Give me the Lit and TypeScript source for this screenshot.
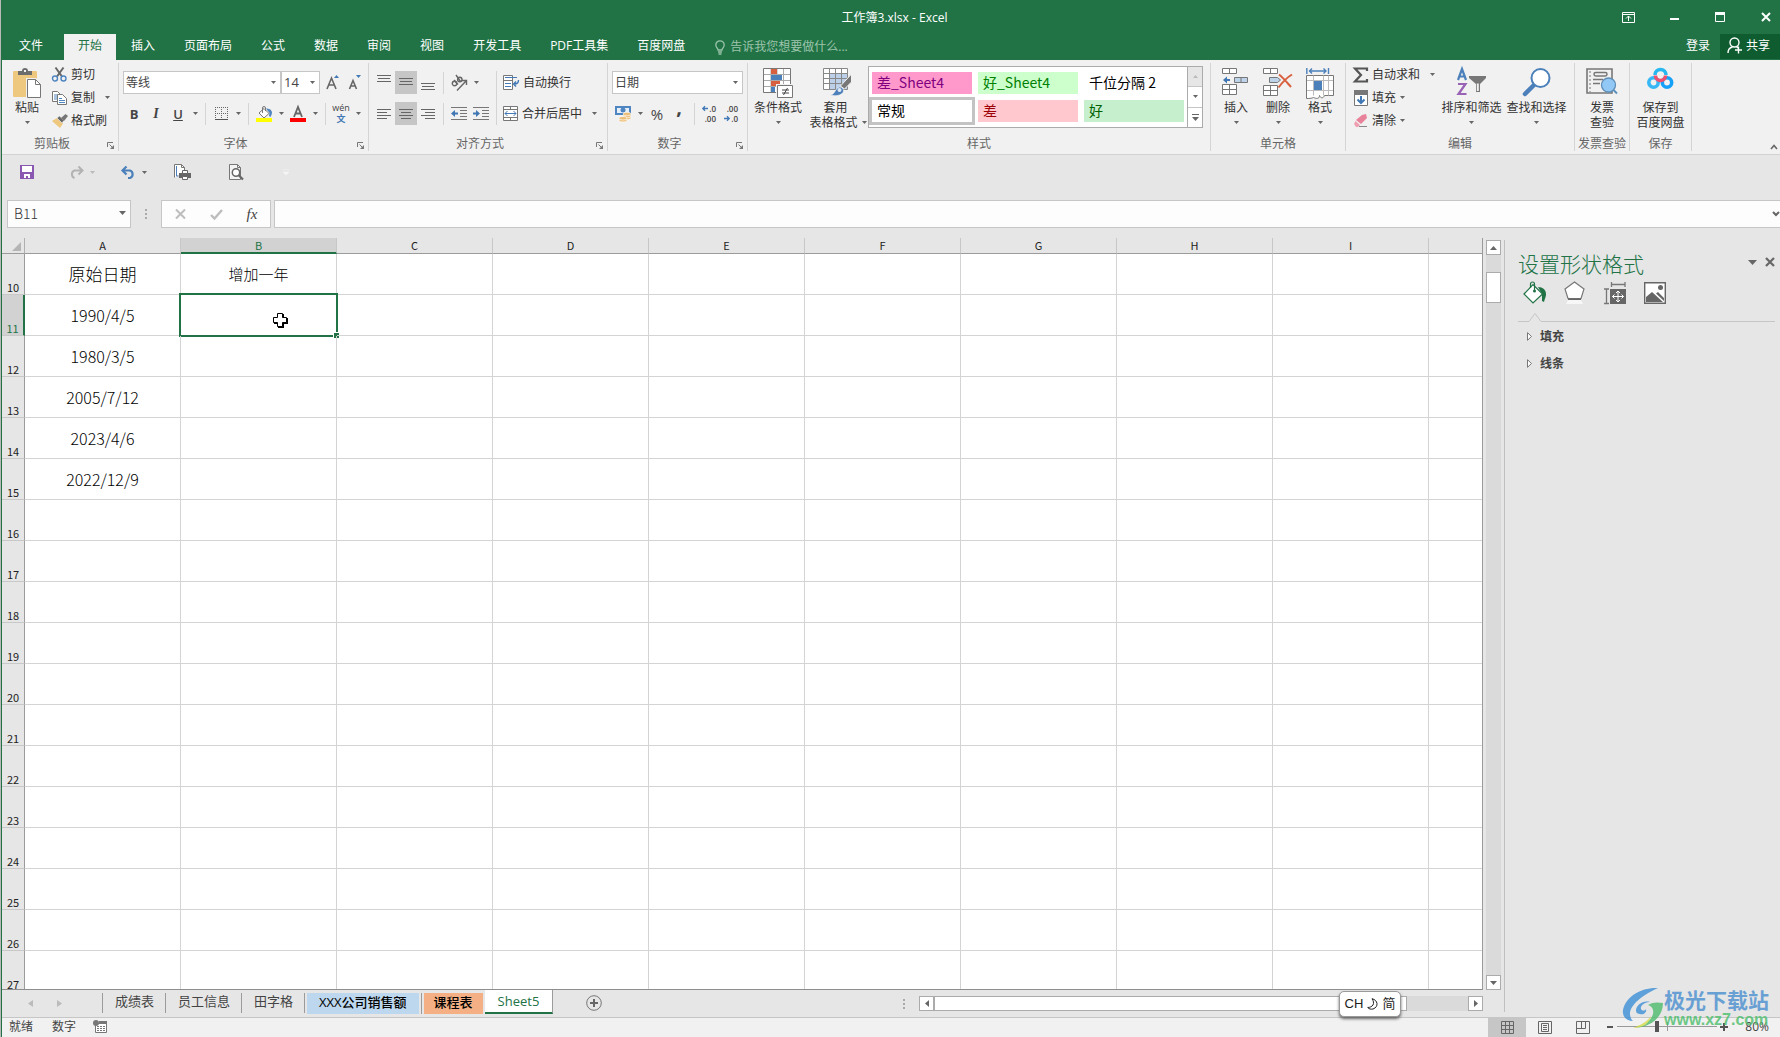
import { LitElement, html, css, nothing, TemplateResult } from "lit";
import { customElement, state } from "lit/decorators.js";
import { classMap } from "lit/directives/class-map.js";

const base = css`
  * { box-sizing: border-box; }
  :host {
    font-family: "Open Sans", "Noto Sans CJK SC", sans-serif;
    font-size: 12px;
    line-height: 16px;
    color: #444;
  }
  button, input, select {
    font: inherit;
    color: inherit;
    margin: 0;
    padding: 0;
    border: 0;
    border-radius: 0;
    background: none;
    outline: 0;
  }
  button { display: inline-flex; align-items: center; justify-content: center; white-space: nowrap; }
  svg { display: block; flex: none; overflow: visible; }
`;

const arrow = (color = "#666") => html`<svg width="5" height="3" viewBox="0 0 5 3"><path d="M0 0h5L2.5 3z" fill=${color} /></svg>`;

const lines = (rows: number[][], h = 15) => html`<svg width="14" height=${h} viewBox="0 0 14 ${h}" fill="#666">
  ${rows.map(([x, y, w]) => html`<svg x=${x} y=${y} width=${w} height="1"><rect width=${w} height="1" /></svg>`)}
</svg>`;

const launcherIcon = html`<svg width="7" height="7" viewBox="0 0 7 7"><path d="M.5 5V.5H6M2.5 2.5l3 3" fill="none" stroke="#777" /><path d="M7 3v4H3z" fill="#777" /></svg>`;

const icons: Record<string, TemplateResult> = {
  paste: html`<svg width="28" height="31" viewBox="0 0 28 31">
    <rect y="3" width="24" height="26" rx="1" fill="#edc87e" />
    <path d="M5 7V3h4a3 3 0 0 1 6 0h4v4z" fill="#6d6d6d" /><rect x="11" y="2" width="2" height="2" fill="#f1f1f1" />
    <path d="M13 10h10l5 5v16H13z" fill="#f1f1f1" />
    <path d="M14.500 11.500h8l5 5v13h-13z" fill="#fff" stroke="#777" /><path d="M22.500 11.500v5h5" fill="none" stroke="#777" /></svg>`,
  cut: html`<svg width="15" height="15" viewBox="0 0 15 15" fill="none">
    <path d="M3.500 0.500l6.500 9M11.500 0.500L5 9.500" stroke="#666" stroke-width="2" />
    <circle cx="3" cy="11.500" r="2.500" stroke="#4f86c1" stroke-width="1.400" /><circle cx="11.500" cy="11.500" r="2.500" stroke="#4f86c1" stroke-width="1.400" /></svg>`,
  copy: html`<svg width="15" height="14" viewBox="0 0 15 14">
    <path d="M.5.5h5l3 3v7h-8z" fill="#fff" stroke="#777" /><path d="M2 4h4M2 6h4M2 8h4" stroke="#4f86c1" />
    <path d="M5.500 3.500h5l4 4v6h-9z" fill="#fff" stroke="#777" /><path d="M7 7.500h3M7 9.500h6M7 11.500h6" stroke="#4f86c1" /></svg>`,
  brush: html`<svg width="16" height="14" viewBox="0 0 16 14">
    <path d="M0 7l5-3 6 5.500L8 14z" fill="#edc87e" /><path d="M5 4l2.500-2L12 6.500 10 9z" fill="#666" stroke="#f1f1f1" stroke-width=".6" />
    <path d="M9 4l4.500-4L16 2l-4 5z" fill="#777" /></svg>`,
  growA: html`<svg width="14" height="15" viewBox="0 0 14 15"><path d="M1 14l4.500-11 4.500 11M2.500 10h6" fill="none" stroke="#666" stroke-width="1.600" /><path d="M8 3l2.500-3L13 3z" fill="#4178b5" /></svg>`,
  shrinkA: html`<svg width="14" height="15" viewBox="0 0 14 15"><path d="M1.500 14L5 5.500 8.500 14M2.500 11h5" fill="none" stroke="#666" stroke-width="1.600" /><path d="M8 0h5l-2.500 3z" fill="#4178b5" /></svg>`,
  borders: html`<svg width="13" height="13" viewBox="0 0 13 13"><path d="M0 .5h13M.5 0v13M12.500 0v13M6.500 0v13M0 6.500h13" stroke="#666" stroke-dasharray="1 1" /><path d="M0 12.500h13" stroke="#555" /></svg>`,
  fill: html`<svg width="16" height="16" viewBox="0 0 16 16"><path d="M3 7l5-4.500L13 7.500 8 12z" fill="#fff" stroke="#777" /><path d="M6.500 7V2a1.500 1.500 0 0 1 3 0v3" fill="none" stroke="#777" />
    <path d="M10 2.500c4-.5 6 2 6 4 0 2-1 3-1.500 4.500L13 10l.5-3z" fill="#4f86c1" /><rect y="12" width="16" height="4" fill="#ff0" /></svg>`,
  fontColor: html`<svg width="16" height="16" viewBox="0 0 16 16"><path d="M4 11L8 1l4 10M5.500 7.500h5" fill="none" stroke="#666" stroke-width="1.800" /><rect y="12" width="16" height="4" fill="#f00" /></svg>`,
  orient: html`<svg width="17" height="16" viewBox="0 0 17 16" fill="none" stroke="#666" stroke-width="1.400"><circle cx="3.500" cy="8.500" r="2.200" /><path d="M3 5l4 4.500" /><circle cx="8.800" cy="4.500" r="2.200" /><path d="M5 0l4.500 6.500M6 15.500L15 6M11 5.500h4.500V10" /></svg>`,
  outdent: html`<svg width="16" height="13" viewBox="0 0 16 13"><path d="M0 .5h16M9 3.500h7M9 6.500h7M9 9.500h7M0 12.500h16" stroke="#777" /><path d="M0 6.500l4-3.500v2.500h3v2H4V10z" fill="#3f76b3" /></svg>`,
  indent: html`<svg width="16" height="13" viewBox="0 0 16 13"><path d="M0 .5h16M9 3.500h7M9 6.500h7M9 9.500h7M0 12.500h16" stroke="#777" /><path d="M7 6.500L3 3v2.500H0v2h3V10z" fill="#3f76b3" /></svg>`,
  wrap: html`<svg width="16" height="15" viewBox="0 0 16 15"><path d="M.5.500h9v14h-9zM.5 5.500h9M.5 10" fill="#fff" stroke="#777" /><path d="M2 2.500h12M2 8.500h6M2 11.500h6" stroke="#4178b5" /><path d="M15.500 5c0 3-1 4-4 4M13 6.500L10.500 9l2.500 2.500" fill="none" stroke="#4178b5" stroke-width="1.400" /></svg>`,
  merge: html`<svg width="15" height="15" viewBox="0 0 15 15"><path d="M.5.500h14v14H.5zM.5 3.500h14M.5 11.500h14M7.500.500v3M7.500 11.500v3" fill="#fff" stroke="#777" /><path d="M2 7.500h11M4.500 5L2 7.500 4.500 10M10.500 5L13 7.500 10.500 10" fill="none" stroke="#4178b5" /></svg>`,
  money: html`<svg width="16" height="16" viewBox="0 0 16 16"><path d="M0 0h16v9H0z" fill="#4f86c1" /><path d="M2 2h12v5H2z" fill="#e6eef7" /><circle cx="8" cy="4" r="2.500" fill="#4f86c1" />
    <g fill="#edc07a" stroke="#fff" stroke-width=".6"><ellipse cx="12" cy="12" rx="4" ry="1.800" /><ellipse cx="12" cy="10" rx="4" ry="1.800" /><ellipse cx="12" cy="8" rx="4" ry="1.800" /><ellipse cx="8" cy="14.200" rx="4" ry="1.800" /><ellipse cx="8" cy="12.200" rx="4" ry="1.800" /></g></svg>`,
  decLeft: html`<svg width="6" height="5" viewBox="0 0 6 5"><path d="M6 2.500H1M3 .3L.8 2.500 3 4.700" fill="none" stroke="#4178b5" stroke-width="1.300" /></svg>`,
  decRight: html`<svg width="6" height="5" viewBox="0 0 6 5"><path d="M0 2.500h5M3 .3l2.200 2.200L3 4.700" fill="none" stroke="#4178b5" stroke-width="1.300" /></svg>`,
  cond: html`<svg width="30" height="30" viewBox="0 0 30 30"><path d="M1 1h26v23H1z" fill="#fff" /><path d="M1 6.500h26M1 12.500h26M1 18.500h26M8 1v23M14 1v23M20.500 1v23" stroke="#aaa" fill="none" />
    <path d="M8 1h6v5H8zM8 13h9v5H8z" fill="#d9603f" /><path d="M8 7h11v5H8zM8 19h4v5H8z" fill="#4b80ba" /><path d="M.5.5h27v24H.5z" fill="none" stroke="#777" />
    <path d="M13 16h17v14H13z" fill="#f1f1f1" /><path d="M14.500 17.500h15v12h-15z" fill="#fff" stroke="#777" /><path d="M19 22h7M19 25h7M24.500 20l-4 7" stroke="#444" /></svg>`,
  table: html`<svg width="30" height="28" viewBox="0 0 30 28"><path d="M.5.5h24v21H.5z" fill="#fff" /><path d="M6 5h19v16H6z" fill="#bdd0e9" /><path d="M.5.5h24v21H.5zM.5 5.500h24M.5 10.500h24M.5 15.500h24M6.500.5v21M12.500.5v21M18.500.5v21" fill="none" stroke="#888" />
    <path d="M28.500 6v8l-7 7-4-3z" fill="#777" stroke="#f1f1f1" /><path d="M7 27c5 0 5-7 9.500-8 3 0 5 3 3.500 5.500-2 3-7 4-13 2.500z" fill="#4b80ba" stroke="#f1f1f1" stroke-width=".7" /><circle cx="16.500" cy="22" r="2" fill="#dfe9f5" /></svg>`,
  insert: html`<svg width="28" height="28" viewBox="0 0 28 28" fill="#fff" stroke="#777"><path d="M.5.5h14v5H.5zM7.500.5v5M.5 16.500h14v10H.5zM7.500 16.500v10M.5 21.500h14" /><path d="M12.500 9.500h13v5h-13zM19 9.500v5" fill="#bdd3ea" /><path d="M1 12l4-3.500v2.500h3v2H5v2.500z" fill="#3f76b3" stroke="none" /></svg>`,
  del: html`<svg width="30" height="28" viewBox="0 0 30 28" fill="#fff" stroke="#777"><path d="M.5.5h14v5H.5zM7.500.5v5M.5 17.500h14v10H.5zM7.500 17.500v10M.5 22.500h14" /><path d="M6.500 9.500h8l3 2.500-3 2.500h-8z" fill="#bdd3ea" /><path d="M16 6.500c4 3 8 8 12 12.500M29 6.500c-5 3-9 7-13.500 13" fill="none" stroke="#d9603f" stroke-width="2" /></svg>`,
  format: html`<svg width="28" height="31" viewBox="0 0 28 31" fill="none" stroke="#4b80ba"><path d="M.8 0v6M22.500 0v6M3 3h17M6 .5L3.500 3 6 5.500M17.500.5L20 3 17.500 5.500" stroke-width="1.400" />
    <path d="M.5 7.500h27v20l-9 0c-1 3-4 3-5 0 0 4-4 3-6 2-2 1-5 1-7 1z" fill="#fff" stroke="#777" /><path d="M1 12.500h26M1 22.500h26M7.500 7.500v20M17.500 7.500v20M22.500 7.500v20" stroke="#bbb" /><path d="M8 13h8v9H8z" fill="#4b80ba" stroke="none" /></svg>`,
  sigma: html`<svg width="15" height="16" viewBox="0 0 15 16"><path d="M14 4V1.500H2L8 8l-6 6.500h12V12" fill="none" stroke="#555" stroke-width="2.200" /></svg>`,
  filldown: html`<svg width="14" height="16" viewBox="0 0 14 16"><path d="M.5.500h13v15H.5z" fill="#fff" stroke="#777" /><path d="M0 0h14v5H0z" fill="#777" /><path d="M7 6v7M3.500 9.500L7 13l3.500-3.500" fill="none" stroke="#3f76b3" stroke-width="2" /></svg>`,
  eraser: html`<svg width="14" height="14" viewBox="0 0 14 14"><path d="M8 1l4-1 1 4-6 6-5-4z" fill="#e8819a" /><path d="M1.500 7l4.500 4-2 2H2L0 10z" fill="#ee9fb2" /><path d="M5 12.500h8" stroke="#888" /></svg>`,
  sort: html`<svg width="29" height="28" viewBox="0 0 29 28"><path d="M1 12L5 1l4 11M2.500 8.500h5" fill="none" stroke="#4b80ba" stroke-width="2.200" /><path d="M1 16h7.500L1.500 26H9.500" fill="none" stroke="#9862b5" stroke-width="2.200" /><path d="M12 8h17v2l-6 6v8h-4v-8l-7-6z" fill="#777" /><path d="M19.800 15.500h2v7.500h-2z" fill="#f1f1f1" /></svg>`,
  find: html`<svg width="28" height="28" viewBox="0 0 28 28"><path d="M11 17L2 26" stroke="#4b80ba" stroke-width="4.500" stroke-linecap="round" /><circle cx="17.500" cy="10" r="9" fill="#fff" stroke="#4b80ba" stroke-width="2" /></svg>`,
  invoice: html`<svg width="32" height="27" viewBox="0 0 32 27" fill="none" stroke="#777"><path d="M1 1h25v24H1z" stroke-width="1.600" /><path d="M4 3v21" stroke-dasharray="2 2" /><rect x="8" y="4.500" width="13" height="3.500" rx="1.700" stroke-width="1.500" /><path d="M7 11.500h10M7 15.500h7" stroke-width="1.400" /><circle cx="22.500" cy="17" r="7" fill="#91c8f5" stroke="#5f8fb8" stroke-width="1.300" /><path d="M27.500 22l3.500 3.500" stroke="#5b8fbd" stroke-width="2" /></svg>`,
  netdisk: html`<svg width="27" height="22" viewBox="0 0 27 22" fill="none" stroke-width="3.600"><circle cx="6.500" cy="14.500" r="4.700" stroke="#37b8f5" /><circle cx="20" cy="14.500" r="4.700" stroke="#16a0f8" /><path d="M8 7a5.500 5.500 0 0 1 11 0" stroke="#28b8f0" /><path d="M8.500 7.500a5 5 0 1 0 10 0" stroke="#f0506e" /></svg>`,
  bulb: html`<svg width="10" height="15" viewBox="0 0 10 15" fill="none" stroke="#9cc4ab" stroke-width="1.300"><path d="M3 10C3 8 .8 7.500.8 5a4.200 4.200 0 0 1 8.400 0C9.200 7.500 7 8 7 10z" /><path d="M3 12h4M3.500 14h3" /></svg>`,
  person: html`<svg width="16" height="17" viewBox="0 0 16 17" fill="none" stroke="#fff" stroke-width="1.400"><circle cx="7.500" cy="5.500" r="4.500" /><path d="M1 16c0-3 2-5.500 4.500-6M9.500 9.500l2 2M8 13h7M11.500 9.500v7" /></svg>`,
  winRibbon: html`<svg width="13" height="11" viewBox="0 0 13 11" fill="none" stroke="#fff"><path d="M.5.5h12v10H.5zM.5 2.500h12M6.500 9V4M4 6.500L6.500 4 9 6.500" /></svg>`,
  winMin: html`<svg width="9" height="11" viewBox="0 0 9 11"><path d="M0 6h9v2H0z" fill="#fff" /></svg>`,
  winMax: html`<svg width="10" height="10" viewBox="0 0 10 10"><path d="M.5.5h9v9h-9z" fill="none" stroke="#fff" /><path d="M0 0h10v3H0z" fill="#fff" /></svg>`,
  winClose: html`<svg width="10" height="10" viewBox="0 0 10 10"><path d="M1 1l8 8M9 1L1 9" stroke="#fff" stroke-width="2" /></svg>`,
  save: html`<svg width="14" height="14" viewBox="0 0 14 14"><path d="M0 0h14v14H0z" fill="#8a58b0" /><path d="M2 1h10v6H2zM4 9h6v4H8v-2H6v2H4z" fill="#fff" /></svg>`,
  redo: html`<svg width="15" height="13" viewBox="0 0 15 13" fill="none" stroke="#b3b3b3" stroke-width="2"><path d="M13 4.500H5.500a4 4 0 0 0 0 7.500M9.500.500l4 4-4 4" /></svg>`,
  undo: html`<svg width="15" height="13" viewBox="0 0 15 13" fill="none" stroke="#4b80ba" stroke-width="2.200"><path d="M2 4.500h7a4 4 0 0 1 0 7.500H7M5.500.500l-4 4 4 4" /></svg>`,
  quickprint: html`<svg width="17" height="16" viewBox="0 0 17 16"><path d="M.5 13.500V.5h7l3 3v3" fill="#fff" stroke="#777" /><path d="M7.500.5v3h3" fill="none" stroke="#777" /><path d="M2.500 2v10h2" fill="none" stroke="#4b80ba" /><path d="M5 9h12v5H5z" fill="#666" /><path d="M8.500 6.500h5v3h-5zM8.500 12.500h5v3h-5z" fill="#fff" stroke="#666" /></svg>`,
  preview: html`<svg width="15" height="16" viewBox="0 0 15 16"><path d="M.5.500h8l3 3v12H.5z" fill="#f4f4f4" stroke="#777" /><path d="M8.500.500v3h3" fill="none" stroke="#777" /><circle cx="7" cy="8.500" r="3.700" fill="#fff" stroke="#666" stroke-width="1.500" /><path d="M9.500 11l4.500 4.500" stroke="#666" stroke-width="2.200" /></svg>`,
  cancel: html`<svg width="11" height="10" viewBox="0 0 11 10"><path d="M1 .5l9 9M10 .5l-9 9" stroke="#bdbdbd" stroke-width="2" /></svg>`,
  check: html`<svg width="13" height="11" viewBox="0 0 13 11"><path d="M1 6l3.500 3.500L12 1" fill="none" stroke="#bdbdbd" stroke-width="2.400" /></svg>`,
  chevDown: html`<svg width="8" height="6" viewBox="0 0 8 6"><path d="M1 1l3 3 3-3" fill="none" stroke="#666" stroke-width="2" /></svg>`,
  chevUp: html`<svg width="8" height="6" viewBox="0 0 8 6"><path d="M1 5l3-3.500L7 5" fill="none" stroke="#666" stroke-width="1.600" /></svg>`,
  record: html`<svg width="14" height="13" viewBox="0 0 14 13"><path d="M2.500 3.500h11v9h-11z" fill="#fff" stroke="#777" /><path d="M6 1h8v3H6z" fill="#777" /><path d="M4 6.500h8M4 8.500h8M4 10.500h8" stroke="#777" stroke-dasharray="2 1" /><circle cx="3" cy="3" r="3" fill="#777" /></svg>`,
  viewNormal: html`<svg width="13" height="13" viewBox="0 0 13 13"><path d="M.5.500h12v12H.5zM.5 4.500h12M.5 8.500h12M4.500.500v12M8.500.500v12" fill="none" stroke="#666" /></svg>`,
  viewPage: html`<svg width="14" height="13" viewBox="0 0 14 13"><path d="M.5.500h13v12H.5zM3.500 2.500h7v8h-7zM5 4.500h4M5 6.500h4M5 8.500h4" fill="none" stroke="#666" /></svg>`,
  viewBreak: html`<svg width="14" height="13" viewBox="0 0 14 13"><path d="M.5.500h13v12H.5zM.5 7.500h9v-7M5.500.500v7" fill="none" stroke="#666" /></svg>`,
};

const menuButton = (icon: string, label: TemplateResult | string, opts: { cls?: string; menu?: boolean } = {}) => html`
  <button class="big ${opts.cls ?? ""}">
    <span class="pic">${icons[icon]}</span>
    <span class="lbl">${label}</span>
    ${opts.menu === false ? nothing : html`<span class="below">${arrow()}</span>`}
  </button>`;

@customElement("ribbon-bar")
class RibbonBar extends LitElement {
  static styles = [base, css`
    :host { display: block; background: #f1f1f1; border-bottom: 1px solid #d2d2d2; }
    .ribbon { display: flex; height: 94px; padding: 3px 0; }
    .group { display: flex; flex-direction: column; border-right: 1px solid #d4d4d4; flex: none; }
    .body { flex: 1; display: flex; }
    .cap { display: grid; grid-template-columns: 1fr; height: 15px; align-items: center; text-align: center; color: #666; line-height: 15px; white-space: nowrap; }
    .cap.wide-end { grid-template-columns: 1fr 16px; }
    .cap button { align-self: end; height: 11px; padding-bottom: 1px; }
    .g-clip { width: 117px; }
    .g-font { width: 250px; }
    .g-align { width: 239px; }
    .g-num { width: 140px; }
    .g-style { width: 463px; }
    .g-cells { width: 135px; }
    .g-edit { width: 229px; }
    .g-inv { width: 55px; }
    .g-save { width: 62px; }
    .big { flex-direction: column; justify-content: flex-start; padding-top: 5px; line-height: 15px; color: #333; }
    .pic { height: 32px; display: flex; align-items: flex-start; }
    .lbl { display: block; }
    .below { height: 14px; display: flex; align-items: center; }
    .paste { width: 50px; }
    .cond { width: 60px; }
    .tbl { width: 60px; }
    .cell { width: 42px; }
    .cells { padding-left: 4px; }
    .wide { width: 65px; }
    .fillw { flex: 1; }
    .with { display: flex; align-items: center; gap: 4px; }
    .over { display: block; width: 52px; }
    .small { display: flex; flex-direction: column; align-items: flex-start; }
    .small button { height: 23px; gap: 4px; color: #333; }
    .small .ic { width: 15px; display: flex; justify-content: center; }
    .small .gap { padding-left: 6px; display: flex; }
    .edit { padding-left: 7px; width: 93px; }
    .edit .near { display: flex; }
    .two { display: flex; flex-direction: column; gap: 8px; padding: 8px 0 0 4px; }
    .two.tools { padding-left: 0; }
    .row { display: flex; height: 23px; align-items: center; }
    .ib { width: 22px; height: 23px; }
    .on { background: #c6c6c6; }
    .dd { width: 12px; height: 23px; }
    .vs { width: 1px; height: 22px; margin: 0 4px; background: #d4d4d4; }
    .tall { width: 1px; height: 54px; margin: 8px 6px 0 4px; background: #d4d4d4; }
    .combo { position: relative; display: block; height: 23px; }
    .combo select { appearance: none; width: 100%; height: 23px; border: 1px solid #c6c6c6; background: #fff; padding: 0 2px; line-height: 21px; }
    .combo svg { position: absolute; right: 5px; top: 10px; }
    .fontname { width: 158px; }
    .fontsize { width: 39px; margin-right: 2px; }
    .fontsize select { font-size: 13px; }
    .numfmt { width: 131px; }
    .bold { font-weight: 700; font-size: 13px; }
    .ital { font-style: italic; font-family: "Liberation Serif", serif; font-weight: 700; font-size: 14px; }
    .und { font-weight: 600; text-decoration: underline; font-size: 13px; }
    .pct { font-size: 15px; }
    .comma { font-size: 20px; font-weight: 700; line-height: 8px; padding-bottom: 14px; }
    .wen { flex-direction: column; line-height: 10px; font-size: 9px; }
    .wen b { color: #4178b5; font-size: 9px; line-height: 12px; }
    .dec { flex-direction: column; align-items: flex-end; padding-right: 5px; font-size: 8px; font-weight: 600; line-height: 10px; }
    .dec span { display: flex; align-items: center; gap: 1px; }
    .lab { gap: 4px; height: 23px; color: #333; justify-content: flex-start; }
    .lab .gap { padding-left: 6px; }
    .gallery { display: flex; margin-top: 3px; height: 62px; border: 1px solid #ababab; background: #fff; }
    .styles { display: grid; grid-template-columns: repeat(3, 106px); grid-auto-rows: 28px; padding-top: 2px; }
    .styles button { justify-content: flex-start; width: 106px; height: 28px; border: 3px solid #fff; padding: 0 0 2px 5px; font-size: 14px; font-family: "Noto Sans CJK SC", sans-serif; line-height: 20px; background-clip: padding-box; }
    .styles .sel { border-color: #c3c3c3; color: #000; }
    .s1 { background: #ff99cc; color: #800080; }
    .s2 { background: #ccffcc; color: #008000; }
    .s3 { color: #000; }
    .s5 { background: #ffc7ce; color: #9c0006; }
    .s6 { background: #c6efce; color: #006100; }
    .spin { display: flex; flex-direction: column; border-left: 1px solid #ababab; width: 15px; }
    .spin button { flex: 1; border-bottom: 1px solid #c6c6c6; width: 14px; }
    .spin button:first-child { background: #e6e6e6; }
    .spin button:last-child { border-bottom: 0; }
    .rest { flex: 1; display: flex; justify-content: flex-end; align-items: flex-end; padding: 0 2px 1px 0; }
  `];

  private caption(text: string, launcher = false) {
    return html`<div class=${classMap({ cap: true, "wide-end": launcher })}><span>${text}</span>${launcher ? html`<button aria-label="${text}设置">${launcherIcon}</button>` : nothing}</div>`;
  }

  private dd(label: string) {
    return html`<button class="dd" aria-label=${label}>${arrow()}</button>`;
  }

  render() {
    return html`<div class="ribbon">
      <section class="group g-clip">
        <div class="body">
          ${menuButton("paste", "粘贴", { cls: "paste" })}
          <div class="small">
            <button><span class="ic">${icons.cut}</span>剪切</button>
            <button><span class="ic">${icons.copy}</span>复制<span class="gap">${arrow()}</span></button>
            <button><span class="ic">${icons.brush}</span>格式刷</button>
          </div>
        </div>
        ${this.caption("剪贴板", true)}
      </section>
      <section class="group g-font">
        <div class="body"><div class="two">
          <div class="row">
            <label class="combo fontname"><select aria-label="字体"><option>等线</option></select>${arrow()}</label>
            <label class="combo fontsize"><select aria-label="字号"><option>14</option></select>${arrow()}</label>
            <button class="ib" aria-label="增大字号">${icons.growA}</button>
            <button class="ib" aria-label="减小字号">${icons.shrinkA}</button>
          </div>
          <div class="row">
            <button class="ib bold">B</button><button class="ib ital">I</button><button class="ib und">U</button>${this.dd("下划线")}
            <span class="vs"></span>
            <button class="ib" aria-label="边框">${icons.borders}</button>${this.dd("边框选项")}
            <span class="vs"></span>
            <button class="ib" aria-label="填充颜色">${icons.fill}</button>${this.dd("填充颜色选项")}
            <button class="ib" aria-label="字体颜色">${icons.fontColor}</button>${this.dd("字体颜色选项")}
            <span class="vs"></span>
            <button class="ib wen"><span>wén</span><b>文</b></button>${this.dd("拼音选项")}
          </div>
        </div></div>
        ${this.caption("字体", true)}
      </section>
      <section class="group g-align">
        <div class="body">
          <div class="two">
            <div class="row">
              <button class="ib" aria-label="顶端对齐">${lines([[0, 0, 14], [1, 3, 12], [0, 6, 14]])}</button>
              <button class="ib on" aria-label="垂直居中">${lines([[0, 3, 14], [1, 6, 12], [0, 9, 14]])}</button>
              <button class="ib" aria-label="底端对齐">${lines([[0, 8, 14], [1, 11, 12], [0, 14, 14]])}</button>
              <span class="vs"></span>
              <button class="ib" aria-label="方向">${icons.orient}</button>${this.dd("方向选项")}
            </div>
            <div class="row">
              <button class="ib" aria-label="左对齐">${lines([[0, 1, 14], [0, 4, 10], [0, 7, 14], [0, 10, 10]], 11)}</button>
              <button class="ib on" aria-label="居中">${lines([[0, 1, 14], [2, 4, 10], [0, 7, 14], [2, 10, 10]], 11)}</button>
              <button class="ib" aria-label="右对齐">${lines([[0, 1, 14], [4, 4, 10], [0, 7, 14], [4, 10, 10]], 11)}</button>
              <span class="vs"></span>
              <button class="ib" aria-label="减少缩进">${icons.outdent}</button>
              <button class="ib" aria-label="增加缩进">${icons.indent}</button>
            </div>
          </div>
          <span class="tall"></span>
          <div class="two tools">
            <button class="lab">${icons.wrap}自动换行</button>
            <button class="lab">${icons.merge}合并后居中<span class="gap">${arrow()}</span></button>
          </div>
        </div>
        ${this.caption("对齐方式", true)}
      </section>
      <section class="group g-num">
        <div class="body"><div class="two">
          <div class="row"><label class="combo numfmt"><select aria-label="数字格式"><option>日期</option></select>${arrow()}</label></div>
          <div class="row">
            <button class="ib" aria-label="会计数字格式">${icons.money}</button>${this.dd("会计格式选项")}
            <button class="ib pct">%</button><button class="ib comma">,</button>
            <span class="vs"></span>
            <button class="ib dec" aria-label="增加小数位数"><span>${icons.decLeft}.0</span><span>.00</span></button>
            <button class="ib dec" aria-label="减少小数位数"><span>.00</span><span>${icons.decRight}.0</span></button>
          </div>
        </div></div>
        ${this.caption("数字", true)}
      </section>
      <section class="group g-style">
        <div class="body">
          ${menuButton("cond", "条件格式", { cls: "cond" })}
          ${menuButton("table", html`<span class="over">套用</span><span class="with">表格格式${arrow()}</span>`, { cls: "tbl", menu: false })}
          <div class="gallery">
            <div class="styles">
              <button class="s1">差_Sheet4</button><button class="s2">好_Sheet4</button><button class="s3">千位分隔 2</button>
              <button class="sel">常规</button><button class="s5">差</button><button class="s6">好</button>
            </div>
            <div class="spin">
              <button aria-label="上一行"><svg width="5" height="3"><path d="M0 3h5L2.500 0z" fill="#bbb" /></svg></button>
              <button aria-label="下一行">${arrow()}</button>
              <button aria-label="其他样式"><svg width="7" height="7"><path d="M0 .5h7" stroke="#666" /><path d="M0 3h7L3.500 7z" fill="#666" /></svg></button>
            </div>
          </div>
        </div>
        ${this.caption("样式")}
      </section>
      <section class="group g-cells">
        <div class="body cells">
          ${menuButton("insert", "插入", { cls: "cell" })}${menuButton("del", "删除", { cls: "cell" })}${menuButton("format", "格式", { cls: "cell" })}
        </div>
        ${this.caption("单元格")}
      </section>
      <section class="group g-edit">
        <div class="body">
          <div class="small edit">
            <button><span class="ic">${icons.sigma}</span>自动求和<span class="gap">${arrow()}</span></button>
            <button><span class="ic">${icons.filldown}</span>填充<span class="near">${arrow()}</span></button>
            <button><span class="ic">${icons.eraser}</span>清除<span class="near">${arrow()}</span></button>
          </div>
          ${menuButton("sort", "排序和筛选", { cls: "wide" })}${menuButton("find", "查找和选择", { cls: "wide" })}
        </div>
        ${this.caption("编辑")}
      </section>
      <section class="group g-inv">
        <div class="body">${menuButton("invoice", html`发票<br />查验`, { cls: "fillw", menu: false })}</div>
        ${this.caption("发票查验")}
      </section>
      <section class="group g-save">
        <div class="body">${menuButton("netdisk", html`保存到<br />百度网盘`, { cls: "fillw", menu: false })}</div>
        ${this.caption("保存")}
      </section>
      <div class="rest"><button aria-label="折叠功能区">${icons.chevUp}</button></div>
    </div>`;
  }
}

@customElement("sheet-grid")
class SheetGrid extends LitElement {
  static styles = [base, css`
    :host { display: block; overflow: hidden; background: #fff; border-right: 1px solid #9b9b9b; border-bottom: 1px solid #8e8e8e; font-family: "Noto Sans CJK SC", sans-serif; }
    table { width: 100%; table-layout: fixed; border-collapse: separate; border-spacing: 0; }
    .ch { width: 23px; }
    .cc { width: 156px; }
    th { font-weight: 400; font-size: 11px; line-height: 14px; background: #e6e6e6; color: #222; padding: 0; }
    thead th { height: 16px; vertical-align: top; border-right: 1px solid #c8c8c8; border-bottom: 1px solid #9b9b9b; }
    thead th.hot { background: #d2d2d2; color: #217346; border-bottom: 2px solid #217346; }
    thead th.corner { border-right-color: #b0b0b0; }
    .corner svg { margin: 4px 3px 0 auto; }
    tbody th { height: 41px; vertical-align: bottom; border-right: 1px solid #9b9b9b; border-bottom: 1px solid #c8c8c8; }
    tbody th.hot { background: #d2d2d2; color: #217346; border-right: 2px solid #217346; }
    td { height: 41px; padding: 0; text-align: center; vertical-align: middle; border-right: 1px solid #d4d4d4; border-bottom: 1px solid #d4d4d4; color: #000; font-weight: 300; font-size: 16px; line-height: 24px; position: relative; }
    td.head { font-size: 17px; }
    td.sub { font-size: 15px; }
    thead th:last-child, td:last-child { border-right: 0; }
    .cursor { position: absolute; inset: -2px; border: 2px solid #217346; }
    .handle { position: absolute; right: -3px; bottom: -3px; width: 6px; height: 6px; background: #217346; border: 1px solid #fff; border-width: 1px 0 0 1px; }
    .pointer { position: absolute; left: 91px; top: 17px; }
  `];

  private cols = ["A", "B", "C", "D", "E", "F", "G", "H", "I", ""];
  private rows = Array.from({ length: 18 }, (_, i) => i + 10);
  private data: Record<string, string> = {
    A10: "原始日期", B10: "增加一年", A11: "1990/4/5", A12: "1980/3/5", A13: "2005/7/12", A14: "2023/4/6", A15: "2022/12/9",
  };
  @state() private active = "B11";

  render() {
    return html`<table>
      <colgroup><col class="ch" />${this.cols.map((c) => html`<col class=${c ? "cc" : ""} />`)}</colgroup>
      <thead><tr><th class="corner"><svg width="9" height="9"><path d="M9 0v9H0z" fill="#b5b5b5" /></svg></th>
        ${this.cols.map((c) => html`<th class=${classMap({ hot: c !== "" && this.active.startsWith(c) })}>${c}</th>`)}</tr></thead>
      <tbody>${this.rows.map((r) => html`<tr><th class=${classMap({ hot: this.active.slice(1) === String(r) })}>${r}</th>
        ${this.cols.map((c) => {
          const id = c + r;
          return html`<td class=${classMap({ head: id === "A10", sub: id === "B10" })}>${this.data[id] ?? ""}${id === this.active ? html`
            <span class="cursor"><span class="handle"></span></span>
            <svg class="pointer" width="16" height="16" viewBox="0 0 16 16"><path d="M6 2h6v4h4v6h-4v4H6v-4H2V6h4z" fill="#000" /><path d="M5.500 1.500h5v4h4v5h-4v4h-5v-4h-4v-5h4z" fill="#fff" stroke="#000" /></svg>` : nothing}</td>`;
        })}</tr>`)}</tbody>
    </table>`;
  }
}

@customElement("format-pane")
class FormatPane extends LitElement {
  static styles = [base, css`
    :host { display: block; border-left: 1px solid #c0c0c0; padding: 10px 5px 0 13px; }
    header { display: flex; align-items: flex-start; }
    h2 { flex: 1; margin: 0; font: 300 21px/26px "Noto Sans CJK SC", sans-serif; color: #217346; white-space: nowrap; }
    .tools { display: flex; gap: 8px; padding-top: 7px; }
    .icons { display: flex; gap: 17px; padding: 5px 0 0 5px; height: 34px; }
    .icons button { width: 23px; height: 23px; }
    .notch { display: flex; padding: 3px 0 1px; }
    .notch i { flex: 1; border-bottom: 1px solid #c6c6c6; height: 9px; }
    .item { display: flex; gap: 8px; height: 27px; width: 100%; padding-left: 9px; justify-content: flex-start; font-weight: 700; color: #444; }
  `];

  render() {
    return html`
      <header><h2>设置形状格式</h2><div class="tools">
        <button aria-label="窗格选项"><svg width="9" height="5"><path d="M0 0h9L4.500 5z" fill="#666" /></svg></button>
        <button aria-label="关闭"><svg width="10" height="10"><path d="M1 1l8 8M9 1L1 9" stroke="#666" stroke-width="2.200" /></svg></button>
      </div></header>
      <div class="icons">
        <button aria-label="填充与线条"><svg width="24" height="22" viewBox="0 0 24 22"><path d="M15 5c5 0 8 3 8 7 0 3-1 4-2 8l-2-1v-7z" fill="#217346" /><path d="M1 12L10 2.500l9.500 9.500L10 21z" fill="#fff" stroke="#217346" stroke-width="1.200" /><path d="M7.500 6V2a2 2 0 0 1 4 0v7" fill="none" stroke="#217346" stroke-width="1.200" /><circle cx="11.500" cy="9" r="1.500" fill="#217346" /></svg></button>
        <button aria-label="效果"><svg width="21" height="23" viewBox="0 0 21 23"><path d="M10.500 1l9.500 7-3 9.500H4L1 8z" fill="#fff" stroke="#777" stroke-width="1.200" /><path d="M4 17.500h13v1.500H4z" fill="#666" /><path d="M4 19l-2 4h17l-2-4z" fill="#f7f7f7" /></svg></button>
        <button aria-label="大小与属性"><svg width="22" height="22" viewBox="0 0 22 22"><path d="M6 7h16v15H6z" fill="#666" /><path d="M7 2.500h14M7.500 0v5M21 0v5M2.500 7v14M0 7h5M0 21.500h5" stroke="#777" stroke-width="1.300" fill="none" /><path d="M14 9v11M8.500 14.500h11M12 11l2-2 2 2M12 18l2 2 2-2M10.500 12.500l-2 2 2 2M17.500 12.500l2 2-2 2" stroke="#fff" fill="none" /></svg></button>
        <button aria-label="图片"><svg width="22" height="22" viewBox="0 0 22 22"><path d="M.7.700h20.600v20.600H.7z" fill="#fff" stroke="#666" stroke-width="1.400" /><circle cx="16.500" cy="5.500" r="2.500" fill="#666" /><path d="M2 20v-5l6-5 11 10zM12 11.500l2-1.500 6 6v3z" fill="#666" /></svg></button>
      </div>
      <div class="notch"><svg width="24" height="9" viewBox="0 0 24 9"><path d="M0 8.500h11l6-8 6 8h1" fill="none" stroke="#c6c6c6" /></svg><i></i></div>
      ${["填充", "线条"].map((t) => html`<button class="item"><svg width="5" height="9"><path d="M.5.700v7.600L4.500 4.500z" fill="#fff" stroke="#777" /></svg>${t}</button>`)}
    `;
  }
}

@customElement("app-root")
class AppRoot extends LitElement {
  static styles = [base, css`
    :host { display: block; padding-left: 1px; background: #b8b8b8; }
    .app { position: relative; display: flex; flex-direction: column; height: 100vh; background: #e6e6e6; border-left: 1px solid #217346; overflow: hidden; }
    .title { display: grid; grid-template-columns: 1fr auto 1fr; height: 34px; align-items: center; background: #217346; color: #fff; padding-left: 7px; }
    .title .doc { padding-top: 2px; }
    .wins { display: flex; justify-content: flex-end; }
    .wins button { width: 46px; height: 30px; }
    .wins button:last-child { width: 28px; margin-left: 9px; }
    nav { display: flex; height: 26px; background: #217346; color: #fff; gap: 1px; }
    nav .tab { padding: 0 14px 2px; }
    nav .file { padding: 0 20px 2px 17px; }
    nav .current { background: #f1f1f1; color: #217346; }
    .tell { display: flex; align-items: center; gap: 5px; padding-left: 15px; flex: 1; }
    .tell input { width: 160px; }
    .tell input::placeholder { color: #9cc4ab; opacity: 1; }
    .login { padding: 0 9px 2px; }
    .share { background: #0e5c2f; width: 60px; height: 25px; gap: 3px; padding: 0 3px 2px 0; }
    .qat { display: flex; align-items: center; height: 34px; padding-left: 15px; margin-bottom: 11px; }
    .qat button { height: 24px; width: 20px; }
    .qat .dd { width: 13px; }
    .qat .sp { margin-left: 29px; }
    .qat .sp2 { margin-left: 19px; }
    .qat .sp3 { margin-left: 21px; }
    .qat .sp4 { margin-left: 34px; }
    .qat .sp5 { margin-left: 30px; }
    .fbar { display: flex; height: 28px; margin-bottom: 10px; padding-left: 5px; }
    .name { position: relative; width: 124px; }
    .name input { width: 100%; height: 28px; border: 1px solid #c6c6c6; background: #fdfdfd; padding: 0 0 2px 6px; font: 300 14px "Noto Sans CJK SC", sans-serif; color: #333; }
    .name button { position: absolute; right: 4px; top: 6px; width: 10px; height: 14px; }
    .dots { width: 30px; display: flex; align-items: center; justify-content: center; }
    .fx { display: flex; width: 110px; justify-content: space-around; border: 1px solid #c6c6c6; background: #fdfdfd; margin-right: 3px; }
    .fx button { width: 30px; }
    .fx .fn { font: italic 400 15px "Liberation Serif", serif; color: #444; }
    .formula { flex: 1; display: flex; border: 1px solid #c6c6c6; border-right: 0; background: #fdfdfd; }
    .formula input { flex: 1; }
    .work { flex: 1; display: flex; min-height: 0; }
    .left { flex: 1; display: flex; flex-direction: column; min-width: 0; }
    .gridrow { flex: 1; display: flex; min-height: 0; }
    sheet-grid { flex: 1; min-width: 0; }
    .vscroll { display: flex; flex-direction: column; width: 15px; margin: 2px 3px 0; background: #dadada; }
    .sb { width: 15px; height: 15px; background: #fff; border: 1px solid #ababab; flex: none; }
    .vthumb { height: 31px; margin-top: 17px; background: #fff; border: 1px solid #ababab; }
    .fillv { flex: 1; }
    format-pane { width: 276px; margin: 2px 0 5px; flex: none; }
    .strip { display: flex; height: 27px; align-items: flex-start; padding-right: 21px; }
    .tabs { display: flex; height: 24px; font-size: 13px; }
    .tabs .nav { width: 29px; }
    .tabs .navs { width: 101px; padding-left: 14px; border-right: 1px solid #9b9b9b; display: flex; margin-top: 3px; height: 20px; }
    .tabs .sheet { padding: 0 11px 0 12px; border-right: 1px solid #9b9b9b; margin-top: 3px; height: 20px; }
    .tabs .sheet span { line-height: 18px; padding-bottom: 4px; }
    .tabs .colored { padding: 0 2px; height: 21px; }
    .tabs .colored span { padding: 0 12px; height: 21px; line-height: 19px; color: #000; font-weight: 500; }
    .tabs .blue span { background: #bdd7ee; }
    .tabs .orange span { background: #f4b084; padding: 0 10px; }
    .tabs .orange { border-right: 0; }
    .tabs .cur { background: #fff; color: #217346; border-right: 1px solid #9b9b9b; border-bottom: 2px solid #217346; padding: 0 13px; }
    .add { width: 20px; height: 24px; margin: 1px 0 0 31px; }
    .hs { flex: 1; display: flex; justify-content: flex-end; align-items: center; height: 27px; gap: 14px; }
    .track { display: flex; width: 564px; background: #dadada; }
    .hthumb { flex: 1; background: #fff; border: 1px solid #ababab; margin-right: 61px; }
    .status { display: flex; align-items: center; height: 20px; background: #f1f1f1; border-top: 1px solid #c6c6c6; padding: 0 11px 2px 7px; }
    .status .txt { margin-right: 19px; }
    .status .txt2 { margin-right: 17px; }
    .views { margin-left: auto; display: flex; }
    .views button { width: 38px; height: 19px; margin-bottom: -2px; }
    .views .on { background: #c6c6c6; }
    .zoom { display: flex; align-items: center; margin-left: 1px; }
    .zoom button { width: 14px; height: 16px; }
    .range { appearance: none; width: 100px; height: 12px; background: linear-gradient(#999, #999) center / 100% 1px no-repeat, linear-gradient(#999, #999) center / 1px 9px no-repeat; }
    .range::-webkit-slider-thumb { appearance: none; width: 4px; height: 11px; background: #555; }
    .pctv { width: 26px; margin-left: 12px; text-align: right; }
    .ime { position: absolute; right: 379px; bottom: 20px; width: 62px; height: 26px; display: flex; align-items: center; justify-content: center; gap: 4px; background: #fff; border: 1px solid #999; border-radius: 5px; box-shadow: 0 2px 3px #666; color: #222; font: 13px/18px "Liberation Sans", "Noto Sans CJK SC", sans-serif; }
    .mark { position: absolute; right: 11px; bottom: 8px; display: flex; opacity: .8; pointer-events: none; }
    .mark div { display: flex; flex-direction: column; }
    .mark b { font: 700 21px/24px "Noto Sans CJK SC", sans-serif; color: #4b8fd0; }
    .mark span { font: 600 16px/18px "Liberation Sans", sans-serif; color: #4dbd6b; }
  `];

  private tabs = ["插入", "页面布局", "公式", "数据", "审阅", "视图", "开发工具", "PDF工具集", "百度网盘"];

  render() {
    return html`<div class="app">
      <div class="title"><span></span><span class="doc">工作簿3.xlsx - Excel</span>
        <div class="wins">
          <button aria-label="功能区显示选项">${icons.winRibbon}</button><button aria-label="最小化">${icons.winMin}</button>
          <button aria-label="最大化">${icons.winMax}</button><button aria-label="关闭">${icons.winClose}</button>
        </div></div>
      <nav>
        <button class="file">文件</button><button class="tab current">开始</button>
        ${this.tabs.map((t) => html`<button class="tab">${t}</button>`)}
        <label class="tell">${icons.bulb}<input aria-label="操作说明搜索" placeholder="告诉我您想要做什么..." /></label>
        <button class="login">登录</button><button class="share">${icons.person}共享</button>
      </nav>
      <ribbon-bar></ribbon-bar>
      <div class="qat">
        <button aria-label="保存">${icons.save}</button>
        <button class="sp" aria-label="恢复">${icons.redo}</button><button class="dd" aria-label="恢复选项">${arrow("#bbb")}</button>
        <button class="sp2" aria-label="撤消">${icons.undo}</button><button class="dd" aria-label="撤消选项">${arrow()}</button>
        <button class="sp3" aria-label="快速打印">${icons.quickprint}</button>
        <button class="sp4" aria-label="打印预览">${icons.preview}</button>
        <button class="sp5" aria-label="自定义快速访问工具栏"><svg width="6" height="6"><path d="M0 .5h6M0 3h6L3 6z" fill="#f5f5f5" stroke="#f5f5f5" stroke-width=".5" /></svg></button>
      </div>
      <div class="fbar">
        <div class="name"><input aria-label="名称框" .value=${"B11"} /><button aria-label="名称列表"><svg width="7" height="4"><path d="M0 0h7L3.500 4z" fill="#666" /></svg></button></div>
        <div class="dots"><svg width="2" height="10" fill="#aaa"><path d="M0 0h2v2H0zM0 4h2v2H0zM0 8h2v2H0z" /></svg></div>
        <div class="fx"><button aria-label="取消">${icons.cancel}</button><button aria-label="输入">${icons.check}</button><button class="fn">fx</button></div>
        <div class="formula"><input aria-label="编辑栏" /><button aria-label="展开编辑栏">${icons.chevDown}</button></div>
      </div>
      <div class="work">
        <div class="left">
          <div class="gridrow">
            <sheet-grid></sheet-grid>
            <div class="vscroll">
              <button class="sb" aria-label="向上滚动"><svg width="7" height="4"><path d="M0 4h7L3.500 0z" fill="#666" /></svg></button>
              <div class="vthumb"></div><div class="fillv"></div>
              <button class="sb" aria-label="向下滚动"><svg width="7" height="4"><path d="M0 0h7L3.500 4z" fill="#666" /></svg></button>
            </div>
          </div>
          <div class="strip">
            <div class="tabs">
              <div class="navs"><button class="nav" aria-label="上一个工作表"><svg width="5" height="7"><path d="M5 0v7L0 3.500z" fill="#bbb" /></svg></button><button class="nav" aria-label="下一个工作表"><svg width="5" height="7"><path d="M0 0v7l5-3.500z" fill="#bbb" /></svg></button></div>
              ${["成绩表", "员工信息", "田字格"].map((t) => html`<button class="sheet"><span>${t}</span></button>`)}
              <button class="sheet colored blue"><span>XXX公司销售额</span></button>
              <button class="sheet colored orange"><span>课程表</span></button>
              <button class="cur">Sheet5</button>
            </div>
            <button class="add" aria-label="新工作表"><svg width="16" height="16"><circle cx="8" cy="8" r="7.300" fill="none" stroke="#777" /><path d="M8 4v8M4 8h8" stroke="#666" stroke-width="2" /></svg></button>
            <div class="hs">
              <svg width="2" height="10" fill="#aaa"><path d="M0 0h2v2H0zM0 4h2v2H0zM0 8h2v2H0z" /></svg>
              <div class="track">
                <button class="sb" aria-label="向左滚动"><svg width="4" height="7"><path d="M4 0v7L0 3.500z" fill="#666" /></svg></button>
                <div class="hthumb"></div>
                <button class="sb" aria-label="向右滚动"><svg width="4" height="7"><path d="M0 0v7l4-3.500z" fill="#666" /></svg></button>
              </div>
            </div>
          </div>
        </div>
        <format-pane></format-pane>
      </div>
      <div class="status">
        <span class="txt">就绪</span><span class="txt2">数字</span><button aria-label="录制宏">${icons.record}</button>
        <div class="views"><button class="on" aria-label="普通">${icons.viewNormal}</button><button aria-label="页面布局">${icons.viewPage}</button><button aria-label="分页预览">${icons.viewBreak}</button></div>
        <div class="zoom">
          <button aria-label="缩小"><svg width="6" height="2"><path d="M0 0h6v2H0z" fill="#555" /></svg></button>
          <input class="range" type="range" aria-label="缩放" min="0" max="200" .value=${"80"} />
          <button aria-label="放大"><svg width="8" height="8"><path d="M3 0h2v8H3zM0 3h8v2H0z" fill="#555" /></svg></button>
          <span class="pctv">80%</span>
        </div>
      </div>
      <div class="ime"><span>CH</span><svg width="11" height="12" viewBox="0 0 11 12"><path d="M5 .7C11 2 12 9 6 11 4 11.500 2 11 .7 9.500 3 9.500 5 8.500 6 7c1-2 .5-4-1-6.300z" fill="none" stroke="#222" /></svg><span>简</span></div>
      <div class="mark">
        <svg width="42" height="42" viewBox="0 0 42 42"><path d="M36 1C20 0 4 9 1 23c-1 7 4 11 10 11C4 27 8 14 36 1z" fill="#3d8fd6" /><path d="M14 24c0-6 7-11 14-9-6 0-10 4-9 7 1 2 4 2 5 0 1 4-3 6-6 5-2 0-4-1-4-3z" fill="#3d8fd6" /><path d="M26 18c4-3 10-3 15-2 0 14-12 24-28 25 9-3 16-7 18-14 1-4-1-8-5-9z" fill="#4dbb6c" /><path d="M11 41c8-3 15-7 18-12-1 7-8 12-18 12z" fill="#d8dc4a" /></svg>
        <div><b>极光下载站</b><span>www.xz7.com</span></div>
      </div>
    </div>`;
  }
}
